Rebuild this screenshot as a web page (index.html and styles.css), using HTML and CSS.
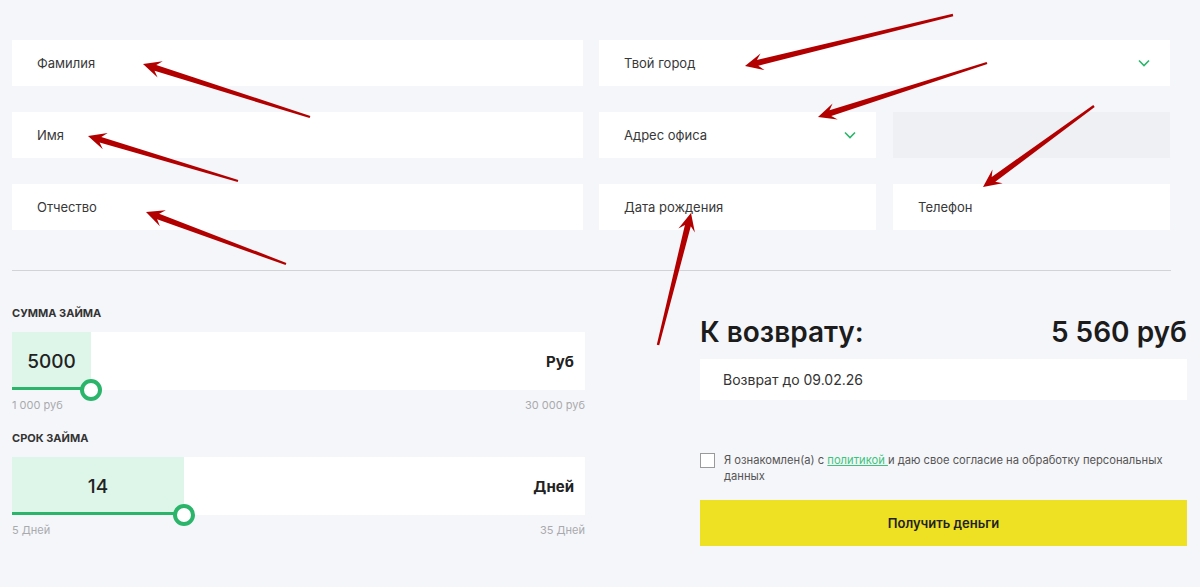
FILE: index.html
```html
<!DOCTYPE html>
<html lang="ru">
    <head>
        <meta charset="UTF-8" />
        <meta name="viewport" content="width=device-width, initial-scale=1.0" />
        <title>Заявка на займ</title>
        <link rel="stylesheet" href="styles.css">
    </head>
    <body>
        <div class="page">
            <div class="fields">
                <div class="field col-left">Фамилия</div>
                <div class="field field-select span-right">Твой город
                    <svg class="chevron" viewBox="0 0 12 8"><path d="M1 1.5l5 5 5-5" /></svg>
                </div>
                <div class="field col-left">Имя</div>
                <div class="field field-select">Адрес офиса
                    <svg class="chevron" viewBox="0 0 12 8"><path d="M1 1.5l5 5 5-5" /></svg>
                </div>
                <div class="field field-disabled"></div>
                <div class="field col-left">Отчество</div>
                <div class="field">Дата рождения</div>
                <div class="field">Телефон</div>
            </div>

            <hr class="divider">

            <div class="calc">
                <div class="calc-left">
                    <div class="calc-label">Сумма займа</div>
                    <div class="slider">
                        <div class="slider-fill" style="width: 13.8%">
                            <span class="slider-value">5000</span>
                            <span class="slider-knob"></span>
                        </div>
                        <span class="slider-unit">Руб</span>
                    </div>
                    <div class="slider-range">
                        <span>1 000 руб</span>
                        <span>30 000 руб</span>
                    </div>

                    <div class="calc-label calc-label-second">Срок займа</div>
                    <div class="slider">
                        <div class="slider-fill" style="width: 30%">
                            <span class="slider-value">14</span>
                            <span class="slider-knob"></span>
                        </div>
                        <span class="slider-unit">Дней</span>
                    </div>
                    <div class="slider-range">
                        <span>5 Дней</span>
                        <span>35 Дней</span>
                    </div>
                </div>

                <div class="calc-right">
                    <div class="total">
                        <span>К возврату:</span>
                        <span>5 560 руб</span>
                    </div>
                    <div class="return-date">Возврат до 09.02.26</div>
                    <label class="agree">
                        <span class="agree-box"></span>
                        <span class="agree-text">Я ознакомлен(а) с <a href="#">политикой&nbsp;</a>и даю свое согласие на обработку персональных<br>данных</span>
                    </label>
                    <button class="btn-submit">Получить деньги</button>
                </div>
            </div>
        </div>

        <svg class="arrows" id="arrows" viewBox="0 0 1200 587"></svg>

        <script>
            // tail x, tail y, tip x, tip y
            const arrows = [
                [310, 117, 143, 64],
                [238, 181, 88, 136],
                [286, 264, 146, 212],
                [953, 15, 745, 66],
                [987, 63, 818, 117],
                [1094, 106, 983, 187],
                [658, 345, 691, 213]
            ];

            const svg = document.getElementById('arrows');

            arrows.forEach(([x1, y1, x2, y2]) => {
                const len = Math.hypot(x2 - x1, y2 - y1);
                const dx = (x2 - x1) / len;
                const dy = (y2 - y1) / len;
                const nx = -dy;
                const ny = dx;
                const headLen = 18;
                const bx = x2 - dx * headLen;
                const by = y2 - dy * headLen;
                const nx2 = bx + dx * 5;
                const ny2 = by + dy * 5;
                const pts = [
                    [x1 + nx * 1.2, y1 + ny * 1.2],
                    [nx2 + nx * 3, ny2 + ny * 3],
                    [bx + nx * 8.5, by + ny * 8.5],
                    [x2, y2],
                    [bx - nx * 8.5, by - ny * 8.5],
                    [nx2 - nx * 3, ny2 - ny * 3],
                    [x1 - nx * 1.2, y1 - ny * 1.2]
                ];
                const poly = document.createElementNS('http://www.w3.org/2000/svg', 'polygon');
                poly.setAttribute('points', pts.map(p => p[0].toFixed(1) + ',' + p[1].toFixed(1)).join(' '));
                svg.appendChild(poly);
            });
        </script>
    </body>
</html>
```

FILE: styles.css
```css
* {
    margin: 0;
    padding: 0;
    box-sizing: border-box;
}

body {
    font-family: Inter, 'Open Sans', sans-serif;
    background-color: #f5f6fa;
    color: #333;
    width: 1200px;
    height: 587px;
    overflow: hidden;
    position: relative;
}

.page {
    padding: 40px 0 0 12px;
}

.fields {
    display: grid;
    grid-template-columns: 571px 277px 278px;
    grid-auto-rows: 46px;
    column-gap: 16px;
    row-gap: 26px;
    width: 1159px;
}

.fields .field:nth-child(5),
.fields .field:nth-child(8) {
    margin-left: 1px;
}

.field {
    background-color: #fff;
    display: flex;
    align-items: center;
    padding: 0 25px;
    font-size: 13px;
    color: #383838;
}

.span-right {
    grid-column: 2 / 4;
}

.field-select {
    justify-content: space-between;
    padding-right: 20px;
}

.field-disabled {
    background-color: #eff0f3;
}

.chevron {
    width: 12px;
    height: 8px;
    fill: none;
    stroke: #2bb56b;
    stroke-width: 1.6;
}

.divider {
    border: none;
    height: 1px;
    background-color: #d2d3d6;
    width: 1159px;
    margin-top: 40px;
}

.calc {
    display: grid;
    grid-template-columns: 573px 487px;
    column-gap: 115px;
}

.calc-left {
    padding-top: 35px;
}

.calc-label {
    font-size: 11px;
    line-height: 14px;
    font-weight: 700;
    text-transform: uppercase;
    color: #333;
    margin-bottom: 12px;
}

.calc-label-second {
    margin-top: 19px;
}

.slider {
    position: relative;
    height: 58px;
    background-color: #fff;
    display: flex;
    align-items: center;
    justify-content: space-between;
}

.slider-fill {
    position: relative;
    height: 100%;
    background-color: #def6e9;
    display: flex;
    align-items: center;
    justify-content: center;
}

.slider-fill::after {
    content: '';
    position: absolute;
    left: 0;
    right: 0;
    bottom: 0;
    height: 3px;
    background-color: #2bb56b;
}

.slider-value {
    font-size: 19px;
    font-weight: 500;
    color: #222;
}

.slider-knob {
    position: absolute;
    right: -11px;
    bottom: -11px;
    width: 22px;
    height: 22px;
    border-radius: 50%;
    border: 4px solid #2bb56b;
    background-color: #fff;
    z-index: 1;
}

.slider-unit {
    font-size: 15px;
    font-weight: 700;
    color: #222;
    padding-right: 11px;
}

.slider-range {
    display: flex;
    justify-content: space-between;
    font-size: 11px;
    line-height: 14px;
    color: #a9aaad;
    margin-top: 8px;
}

.calc-right {
    padding-top: 44px;
}

.total {
    display: flex;
    justify-content: space-between;
    font-size: 28px;
    line-height: 34px;
    font-weight: 600;
    color: #1c1c1c;
}

.return-date {
    margin-top: 10px;
    height: 41px;
    background-color: #fff;
    display: flex;
    align-items: center;
    padding-left: 23px;
    font-size: 14px;
    color: #333;
}

.agree {
    display: flex;
    gap: 9px;
    margin-top: 52px;
    font-size: 11.2px;
    line-height: 16px;
    color: #555;
}

.agree-box {
    flex: none;
    width: 15px;
    height: 15px;
    margin-top: 1px;
    border: 1px solid #9a9a9a;
    background-color: #fff;
}

.agree a {
    color: #3cc47c;
}

.btn-submit {
    display: block;
    width: 100%;
    height: 46px;
    margin-top: 16px;
    border: none;
    background-color: #eee022;
    font-family: inherit;
    font-size: 13px;
    font-weight: 600;
    color: #222;
    cursor: pointer;
}

.arrows {
    position: absolute;
    top: 0;
    left: 0;
    width: 1200px;
    height: 587px;
    pointer-events: none;
    fill: #b20000;
}
```
